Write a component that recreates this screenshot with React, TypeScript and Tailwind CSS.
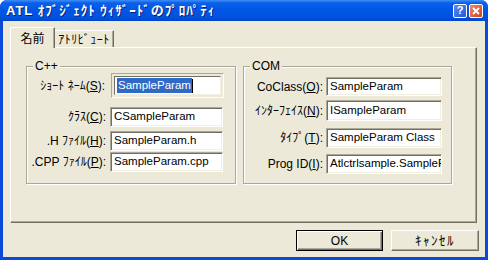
import React from "react";

const font = "font-['Liberation_Sans','Noto_Sans_CJK_JP',sans-serif]";

const Key = ({ k }: { k: string }) => (
  <>
    (<span className="underline underline-offset-[1px]">{k}</span>):
  </>
);

const Field = ({ value, w, h = 20 }: { value: string; w: number; h?: number }) => (
  <div
    className="bg-white border border-t-[#ACA899] border-l-[#ACA899] border-r-white border-b-white shadow-[inset_1px_1px_0_#716F64,inset_-1px_-1px_0_#F1EFE2] flex items-center pl-[3px] overflow-hidden whitespace-nowrap text-[11.5px] text-black"
    style={{ width: w, height: h }}
  >
    {value}
  </div>
);

interface Row {
  label: string;
  k: string;
  value: string;
  top: number;
  h?: number;
}

const cppRows: Row[] = [
  { label: "ｸﾗｽ", k: "C", value: "CSampleParam", top: 9 },
  { label: ".H ﾌｧｲﾙ", k: "H", value: "SampleParam.h", top: 4 },
  { label: ".CPP ﾌｧｲﾙ", k: "P", value: "SampleParam.cpp", top: 1 },
];

const comRows: Row[] = [
  { label: "CoClass", k: "O", value: "SampleParam", top: 10, h: 19 },
  { label: "ｲﾝﾀｰﾌｪｲｽ", k: "N", value: "ISampleParam", top: 4, h: 21 },
  { label: "ﾀｲﾌﾟ", k: "T", value: "SampleParam Class", top: 7 },
  { label: "Prog ID", k: "I", value: "Atlctrlsample.SampleParam", top: 6 },
];

const GroupBox = ({
  legend,
  width,
  children,
}: {
  legend: string;
  width: number;
  children: React.ReactNode;
}) => (
  <div
    className="relative h-[118px] border border-[#ACA899] shadow-[inset_1px_1px_0_#fff,1px_1px_0_#fff] flex flex-col"
    style={{ width }}
  >
    <span className="absolute left-[6px] top-[-8px] bg-[#ECE9D8] px-[2px] text-[12px] leading-[14px]">
      {legend}
    </span>
    {children}
  </div>
);

const App = () => {
  return (
    <div
      className={`w-[488px] h-[260px] rounded-t-[7px] bg-[#0a4ad8] flex flex-col overflow-hidden ${font}`}
    >
      {/* title bar */}
      <div className="h-[21px] flex items-center pl-[6px] pr-[5px] bg-[linear-gradient(to_bottom,#3d8ff7_0%,#0a5fea_14%,#0055e5_50%,#0052de_85%,#0044c4_100%)]">
        <span className="text-white font-bold text-[13px] tracking-[1px] leading-none [text-shadow:1px_1px_0_#0a1f7a] whitespace-nowrap">
          ATL ｵﾌﾞｼﾞｪｸﾄ ｳｨｻﾞｰﾄﾞのﾌﾟﾛﾊﾟﾃｨ
        </span>
        <div className="ml-auto flex gap-[2px]">
          <div className="w-[14px] h-[14px] rounded-[2px] border border-white bg-[linear-gradient(135deg,#5b8cf0,#2457d6)] flex items-center justify-center text-white text-[11px] font-bold leading-none">
            ?
          </div>
          <div className="w-[14px] h-[14px] rounded-[2px] border border-white bg-[linear-gradient(135deg,#e98a6c,#d4411c)] flex items-center justify-center">
            <svg width="8" height="8" viewBox="0 0 8 8">
              <path d="M1 1L7 7M7 1L1 7" stroke="#fff" strokeWidth="1.8" />
            </svg>
          </div>
        </div>
      </div>

      {/* client area */}
      <div className="flex-1 mx-[3px] mb-[3px] bg-[#ECE9D8] flex flex-col text-black">
        {/* tabs */}
        <div className="h-[26px] pl-[7px] flex items-end">
          <div className="relative z-10 h-[21px] -mb-px w-[45px] bg-[#ECE9D8] border-t border-l border-white border-r border-r-[#716F64] shadow-[inset_-1px_0_0_#ACA899] rounded-tl-[2px] flex items-start justify-center pt-[4px] text-[12px] leading-[14px]">
            名前
          </div>
          <div className="h-[17px] w-[59px] border-t border-white border-r border-r-[#716F64] shadow-[inset_-1px_0_0_#ACA899] flex items-start justify-center pt-[2px] text-[12px] leading-[14px] tracking-[0.5px]">
            ｱﾄﾘﾋﾞｭｰﾄ
          </div>
        </div>

        {/* panel */}
        <div className="ml-[7px] w-[467px] h-[176px] border-t border-l border-white border-r border-b border-r-[#716F64] border-b-[#716F64] shadow-[inset_-1px_-1px_0_#ACA899] pl-[15px] pt-[18px] flex gap-[7px]">
          <GroupBox legend="C++" width={210}>
            <div className="flex items-center mt-[6px]">
              <span className="w-[82px] text-right text-[12px] pr-[4px] whitespace-nowrap">
                ｼｮｰﾄ ﾈｰﾑ<Key k="S" />
              </span>
              <div className="ml-[2px] w-[113px] h-[25px] border border-t-[#ACA899] border-l-[#ACA899] border-r-white border-b-white p-[2px] bg-[#ECE9D8]">
                <div className="w-full h-full bg-white border border-t-[#716F64] border-l-[#716F64] border-r-[#F1EFE2] border-b-[#F1EFE2] flex items-center pl-[2px] text-[11.5px]">
                  <span className="bg-[#316AC5] text-white px-px leading-[15px]">
                    SampleParam
                  </span>
                  <span className="w-px h-[14px] bg-black" />
                </div>
              </div>
            </div>
            {cppRows.map((r) => (
              <div
                key={r.k}
                className="flex items-center"
                style={{ marginTop: r.top }}
              >
                <span className="w-[83px] text-right text-[12px] pr-[4px] whitespace-nowrap">
                  {r.label}
                  <Key k={r.k} />
                </span>
                <Field value={r.value} w={113} h={r.h ?? 20} />
              </div>
            ))}
          </GroupBox>

          <GroupBox legend="COM" width={209}>
            {comRows.map((r) => (
              <div
                key={r.k}
                className="flex items-center"
                style={{ marginTop: r.top }}
              >
                <span className="w-[82px] text-right text-[12px] pr-[3px] whitespace-nowrap">
                  {r.label}
                  <Key k={r.k} />
                </span>
                <Field value={r.value} w={116} h={r.h ?? 20} />
              </div>
            ))}
          </GroupBox>
        </div>

        {/* buttons */}
        <div className="mt-[7px] pr-[6px] flex justify-end gap-[8px]">
          <button className="w-[87px] h-[21px] border border-black bg-[#ECE9D8] text-[12px] shadow-[inset_1px_1px_0_#fff,inset_-1px_-1px_0_#716F64,inset_-2px_-2px_0_#ACA899]">
            OK
          </button>
          <button className="w-[88px] h-[21px] bg-[#ECE9D8] text-[13px] tracking-[1.5px] border border-t-white border-l-white border-r-[#716F64] border-b-[#716F64] shadow-[inset_-1px_-1px_0_#ACA899]">
            ｷｬﾝｾﾙ
          </button>
        </div>
      </div>
    </div>
  );
};

export default App;
